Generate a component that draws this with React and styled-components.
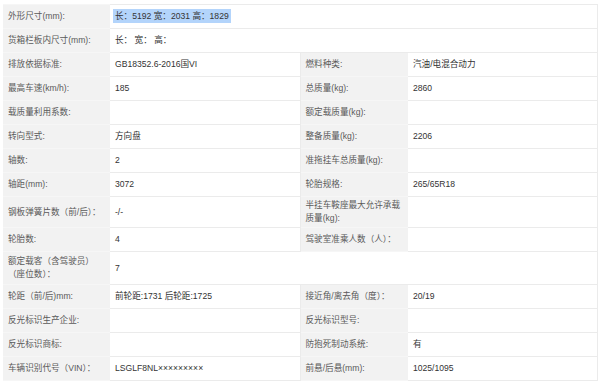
import React from "react";
import styled, { createGlobalStyle } from "styled-components";

const GlobalStyle = createGlobalStyle`
  html, body {
    margin: 0;
    padding: 0;
    background: #fff;
  }
  body {
    font-family: "Liberation Sans", "Noto Sans CJK SC", sans-serif;
  }
`;

const Page = styled.div`
  width: 600px;
  height: 387px;
  padding: 4px 3px 0 3px;
  box-sizing: border-box;
  overflow: hidden;
`;

const Table = styled.table`
  width: 594px;
  table-layout: fixed;
  border-collapse: collapse;
  font-size: 8.6px;
  line-height: 13px;
`;

const Row = styled.tr`
  height: ${(p) => p.h || 24}px;
`;

const Label = styled.td`
  background: #f2f2f2;
  color: #5a5a5a;
  padding: 0 5px;
  border-top: 1px solid #f6f6f6;
  border-bottom: 1px solid #f6f6f6;
  vertical-align: middle;
  word-break: break-all;
`;

const Value = styled.td`
  background: #fff;
  color: #333;
  padding: 0 5px;
  border: 1px solid #ebebeb;
  border-left: none;
  vertical-align: middle;
`;

const Selected = styled.span`
  background: #b3d4fb;
  padding: 2px 2px;
  margin-left: -2px;
`;

const rows = [
  { l1: "外形尺寸(mm):", v1: <Selected>长：5192 宽：2031 高：1829</Selected>, span: true },
  { l1: "货箱栏板内尺寸(mm):", v1: "长：  宽：  高：", span: true },
  { l1: "排放依据标准:", v1: "GB18352.6-2016国VI", l2: "燃料种类:", v2: "汽油/电混合动力" },
  { l1: "最高车速(km/h):", v1: "185", l2: "总质量(kg):", v2: "2860" },
  { l1: "载质量利用系数:", v1: "", l2: "额定载质量(kg):", v2: "" },
  { l1: "转向型式:", v1: "方向盘", l2: "整备质量(kg):", v2: "2206" },
  { l1: "轴数:", v1: "2", l2: "准拖挂车总质量(kg):", v2: "" },
  { l1: "轴距(mm):", v1: "3072", l2: "轮胎规格:", v2: "265/65R18" },
  { l1: "钢板弹簧片数（前/后）：", v1: "-/-", l2: "半挂车鞍座最大允许承载质量(kg):", v2: "", h: 31 },
  { l1: "轮胎数:", v1: "4", l2: "驾驶室准乘人数（人）：", v2: "" },
  { l1: "额定载客（含驾驶员）（座位数）：", v1: "7", span: true, h: 33 },
  { l1: "轮距（前/后)mm:", v1: "前轮距:1731 后轮距:1725", l2: "接近角/离去角（度）：", v2: "20/19" },
  { l1: "反光标识生产企业:", v1: "", l2: "反光标识型号:", v2: "" },
  { l1: "反光标识商标:", v1: "", l2: "防抱死制动系统:", v2: "有" },
  { l1: "车辆识别代号（VIN）：", v1: "LSGLF8NL×××××××××", l2: "前悬/后悬(mm):", v2: "1025/1095" },
];

export default function App() {
  return (
    <>
      <GlobalStyle />
      <Page>
        <Table>
          <colgroup>
            <col style={{ width: 107 }} />
            <col style={{ width: 190 }} />
            <col style={{ width: 108 }} />
            <col style={{ width: 189 }} />
          </colgroup>
          <tbody>
            {rows.map((r, i) => (
              <Row key={i} h={r.h}>
                <Label>{r.l1}</Label>
                {r.span ? (
                  <Value colSpan={3}>{r.v1}</Value>
                ) : (
                  <>
                    <Value>{r.v1}</Value>
                    <Label>{r.l2}</Label>
                    <Value>{r.v2}</Value>
                  </>
                )}
              </Row>
            ))}
          </tbody>
        </Table>
      </Page>
    </>
  );
}
